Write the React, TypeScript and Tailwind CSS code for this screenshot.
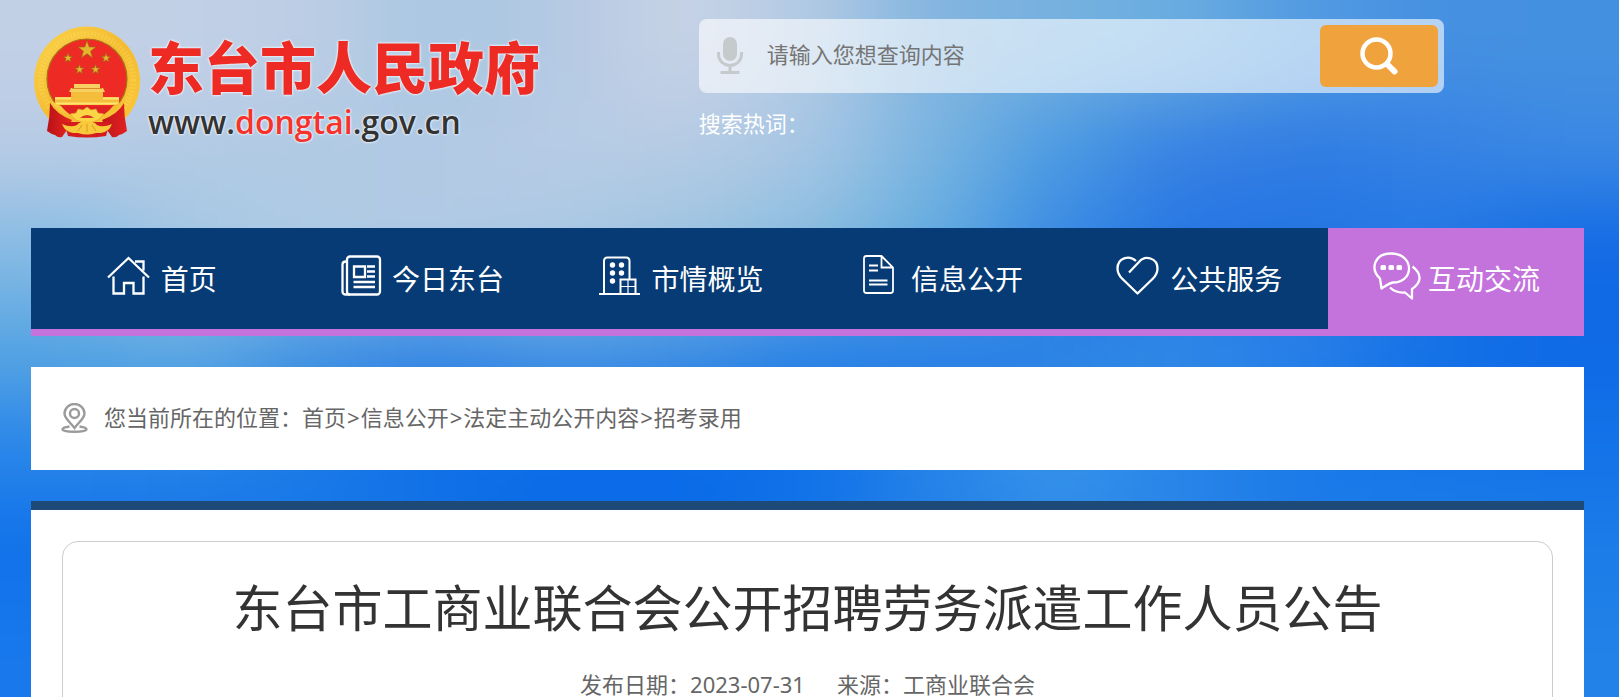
import type { ReactNode } from "react";

// Soft sky backdrop: one colour per cell, blended together by a blur
const sky = [
  ["#c2d0e6", "#c2d0e6", "#bccde5", "#a9c7e1", "#b4c9e3", "#c8d3e6", "#b2cae4", "#82b4df", "#76b1e0", "#68ace0", "#529ae2", "#4690e1", "#4490e0"],
  ["#b8cbe5", "#b2cae4", "#b0cae4", "#b2c9e4", "#b8cce5", "#b6cbe4", "#a6c6e4", "#78b4e0", "#4a9ae2", "#3680e3", "#2f7ce3", "#3481e5", "#3a88e4"],
  ["#86bbe4", "#a4c8e4", "#b0cbe4", "#b2cae4", "#aac8e3", "#9cc4e1", "#88bcdf", "#62ace0", "#3688e4", "#2474e3", "#2374e3", "#2478e3", "#1269e4"],
  ["#56a4e2", "#5faae2", "#4494e2", "#3a8ae4", "#4796e3", "#3f90e3", "#2c84e5", "#2a80e5", "#2a80e4", "#3089e6", "#2880e8", "#1270e6", "#0f6ae6"],
  ["#2885e9", "#2683e7", "#1b79e6", "#0f6fe6", "#0a6ae8", "#0a6ae8", "#0f70e8", "#2884e8", "#3794e9", "#2884e8", "#1a79e8", "#1676e8", "#1373e8"],
  ["#1071ea", "#1474ea", "#1878ea", "#1272e8", "#0c6ce8", "#0c6ce8", "#1474e8", "#2080e8", "#2e8ae8", "#2884e8", "#1c7ce8", "#1c7ce8", "#1c7ce8"],
  ["#1878ec", "#1878ec", "#1878ec", "#1878ec", "#1878ec", "#1878ec", "#1878ec", "#1c7ce8", "#1f80e8", "#1f80e8", "#1f80e8", "#2080e8", "#2282e8"],
];

const Sky = () => {
  const cells = [];
  for (let y = -1; y <= 7; y++) {
    for (let x = -1; x <= 13; x++) {
      const row = sky[Math.min(Math.max(y, 0), 6)];
      cells.push(
        <rect key={`${x},${y}`} x={x * 10} y={y * 10} width="10.2" height="10.2" fill={row[Math.min(Math.max(x, 0), 12)]} />
      );
    }
  }
  return (
    <svg
      className="absolute inset-x-0 top-0 h-[700px] w-full"
      viewBox="0 0 130 70"
      preserveAspectRatio="none"
      aria-hidden="true"
    >
      <filter id="soft" filterUnits="userSpaceOnUse" x="-10" y="-10" width="150" height="90" colorInterpolationFilters="sRGB">
        <feGaussianBlur stdDeviation="4" />
      </filter>
      <g filter="url(#soft)">{cells}</g>
    </svg>
  );
};

const starPoints = (cx: number, cy: number, r: number) =>
  Array.from({ length: 10 }, (_, i) => {
    const radius = i % 2 ? r * 0.4 : r;
    const a = (Math.PI / 5) * i - Math.PI / 2;
    return `${cx + radius * Math.cos(a)},${cy + radius * Math.sin(a)}`;
  }).join(" ");

const Emblem = () => (
  <svg className="h-[112px] w-[106px] shrink-0" viewBox="0 0 106 112" aria-hidden="true">
    <defs>
      <linearGradient id="gold" x1="0" y1="0" x2="1" y2="1">
        <stop offset="0" stopColor="#fbd34a" />
        <stop offset="0.5" stopColor="#f4bb30" />
        <stop offset="1" stopColor="#fbc93a" />
      </linearGradient>
      <linearGradient id="drape" x1="0" y1="0" x2="1" y2="0">
        <stop offset="0" stopColor="#b81218" />
        <stop offset="0.3" stopColor="#e8241f" />
        <stop offset="0.6" stopColor="#b3141a" />
        <stop offset="1" stopColor="#e3211f" />
      </linearGradient>
    </defs>
    <ellipse cx="53" cy="55" rx="53" ry="54.500" fill="url(#gold)" />
    <circle cx="53" cy="54" r="46" fill="none" stroke="#fde06a" strokeWidth="6" strokeDasharray="2 1.500" opacity="0.3" />
    <circle cx="53" cy="53" r="40" fill="#ed2b24" stroke="#a8701a" strokeWidth="1.200" />
    {[
      [53, 24, 9.5],
      [34, 32, 5],
      [72, 32, 5],
      [45.5, 43.5, 5],
      [61.5, 43.5, 5],
    ].map(([x, y, r]) => (
      <polygon key={x} points={starPoints(x, y, r)} fill="#e6b52e" stroke="#a0611a" strokeWidth="0.700" />
    ))}
    <path d="M40 58h26v4h3l2 4h-2v3H37v-3h-2l2-4h3z" fill="#f8cf63" />
    <path d="M38 62.500h30" stroke="#d88a25" strokeWidth="1" />
    <path d="M37 66h32v5h16v8H21v-8h16z" fill="#f5bd3c" />
    <path d="M21 72.500h16M69 72.500h16M22 77.500h62" stroke="#fde56f" strokeWidth="2" />
    <path d="M25 80h56L71 90l-18 5-18-5z" fill="#de2322" />
    <path d="M16 77q6 11 22 17l-5 10-5 7q-4 1-7-2-4-1-8-4 3-14 3-28zM90 77q-6 11-22 17l5 10 5 7q4 1 7-2 4-1 8-4-3-14-3-28z" fill="url(#drape)" />
    <path d="M17 75q10 17 36 23 26-6 36-23l-10 5q-8 10-16 11-10 7-20 0-8-1-16-11z" fill="url(#gold)" />
    <path d="M30 96h46l-4 14q-19 3-38 0z" fill="#d41c1f" />
    <path d="M36 88l6-1 2-4 5 1 4-3 4 3 5-1 2 4 6 1-6 6q-11 5-22 0z" fill="#fbd546" stroke="#e0a028" strokeWidth="0.600" />
    <path d="M46 92q7-6 14 0z" fill="#d63a20" />
    <path d="M28 98q9 4 15 1 3-4 10-4t10 4q6 3 15-1-3 8-11 9h-5q-9 3-18 0h-5q-8-1-11-9z" fill="#f8ca3b" />
    <path d="M53 98v8M48 99l-4 6M58 99l4 6" stroke="#d99a25" strokeWidth="1" />
  </svg>
);

const NavIcon = ({ children }: { children: ReactNode }) => (
  <svg
    className="mb-1.5 size-12 shrink-0 overflow-visible"
    viewBox="0 0 48 48"
    fill="none"
    stroke="currentColor"
    strokeWidth="2.300"
    aria-hidden="true"
  >
    {children}
  </svg>
);

const navItems = [
  {
    label: "首页",
    icon: (
      <NavIcon>
        <path d="M1 25.500 21.500 6 42 25.500M28 9.500h8.500v9M6.500 24.500V41.500h10.500V31h9.500v10.500H36.500v-17" />
      </NavIcon>
    ),
  },
  {
    label: "今日东台",
    icon: (
      <NavIcon>
        <rect x="9" y="4.500" width="33" height="38" rx="3" />
        <path d="M8 9.500q-3.500 0-3.500 3v27q0 3 3.500 3H12M16 14.500h11v10.500H16zM29 14.500h8M29 19.500h8M29 24.500h8M15.500 30H37M15.500 35H37" />
      </NavIcon>
    ),
  },
  {
    label: "市情概览",
    icon: (
      <NavIcon>
        <path d="M6 41.500V9q0-3.500 3.500-3.500h18.500q3.500 0 3.500 3.500v18M1 42h41M22.500 42V27.500h15V42" strokeWidth="2" />
        <path d="M22.500 34.500H37M30 27v15" strokeWidth="1.200" />
        <g fill="currentColor" stroke="none">
          <circle cx="14.500" cy="13" r="2.700" />
          <circle cx="23.500" cy="13" r="2.700" />
          <circle cx="14.500" cy="21" r="2.700" />
          <circle cx="23.500" cy="21" r="2.700" />
          <circle cx="14.500" cy="29" r="2.700" />
        </g>
      </NavIcon>
    ),
  },
  {
    label: "信息公开",
    icon: (
      <NavIcon>
        <path d="M24.500 4H9.500Q7 4 7 6.500v32Q7 41 9.500 41h24q2.500 0 2.500-2.500V15.500zV15.500H36M12 13.500h9M12 18.500h9M12 28.500h18.500M12 32.500h18.500" strokeWidth="1.800" />
      </NavIcon>
    ),
  },
  {
    label: "公共服务",
    icon: (
      <NavIcon>
        <path
          d="M20 9C13 2.500 1.500 6 1.500 16.500c0 5 2 7.500 4.500 10L21.500 41.500 37 26.500c2.500-2.500 4.500-5 4.500-10C41.500 6 29 2.500 23 10L13 20.500"
          strokeLinejoin="round"
        />
      </NavIcon>
    ),
  },
  {
    label: "互动交流",
    active: true,
    icon: (
      <NavIcon>
        <path d="M6 26.500C-4 17 0 1.500 17 1.500c11 0 18 6.500 18 15 0 9-7.500 14-16 14-4 .5-7.500 3.500-11.500 6z" strokeLinejoin="round" />
        <path d="M38.500 14.500c9 7 10 15.500-.5 22.500v9.500L31 40.500c-6 .5-11-1-15-5" strokeLinejoin="round" />
        <g fill="currentColor" stroke="none">
          <rect x="6.500" y="13" width="5.500" height="5" rx="1.500" />
          <rect x="14.500" y="13" width="5.500" height="5" rx="1.500" />
          <rect x="22.500" y="13" width="5.500" height="5" rx="1.500" />
        </g>
      </NavIcon>
    ),
  },
];

const crumbs = ["首页", "信息公开", "法定主动公开内容", "招考录用"];

const Header = () => (
  <header className="flex items-start">
    <a href="#" className="flex w-[43%] items-start gap-2 pt-[26px] pl-[3px]">
      <Emblem />
      <span className="flex flex-col pt-2 whitespace-nowrap [text-shadow:0_0_2px_#fff,0_0_3px_#fff]">
        <span className="text-[56px] leading-[66px] font-black text-[#ed2b24]">东台市人民政府</span>
        <span className="font-['Open_Sans','Noto_Sans',sans-serif] text-[32px] leading-[44px] font-semibold text-[#333]">
          www.<span className="text-[#f5322b]">dongtai</span>.gov.cn
        </span>
      </span>
    </a>
    <div className="w-[48%] pt-[19px]">
      <form className="flex h-[74px] items-center rounded-lg bg-white/60 p-1.5" onSubmit={(e) => e.preventDefault()}>
        <svg className="ml-3 h-[38px] w-[26px] shrink-0" viewBox="0 0 26 38" fill="none" stroke="#c5cacd" strokeWidth="3" aria-hidden="true">
          <rect x="6" y="0" width="14" height="24" rx="7" fill="#c5cacd" stroke="none" />
          <path d="M1.500 15v2.500a11.500 11 0 0 0 23 0V15M13 28v7M3.500 35.500h19" />
        </svg>
        <input
          type="text"
          aria-label="搜索"
          placeholder="请输入您想查询内容"
          className="min-w-0 flex-1 bg-transparent px-6 pb-1 text-[22px] text-[#333] outline-none placeholder:text-[#757575]"
        />
        <button
          type="submit"
          aria-label="查询"
          className="flex h-full w-[118px] shrink-0 items-center justify-center rounded-md bg-[#f0a23c] text-white"
        >
          <svg className="size-[38px]" viewBox="0 0 38 38" fill="none" stroke="currentColor" aria-hidden="true">
            <circle cx="16.500" cy="16.500" r="14" strokeWidth="4.500" />
            <path d="M27 27l7.500 7.500" strokeWidth="6" strokeLinecap="round" />
          </svg>
        </button>
      </form>
      <p className="mt-3 text-[22px] leading-9 text-white">搜索热词：</p>
    </div>
  </header>
);

export default function App() {
  return (
    <div className="relative min-h-screen overflow-hidden bg-[#1a7aec] font-['Noto_Sans','Noto_Sans_CJK_SC',sans-serif]" lang="zh-CN">
      <Sky />
      <div className="relative mr-[35px] ml-[31px]">
        <div className="min-h-[228px]">
          <Header />
        </div>

        <nav className="flex border-b-[7px] border-[#c573dc] bg-[#063b75]">
          {navItems.map((item) => (
            <a
              key={item.label}
              href="#"
              className={`flex h-[101px] items-center justify-center gap-1.5 pl-0.5 text-[28px] whitespace-nowrap text-white ${
                item.active ? "w-[256px] bg-[#c573dc]" : "flex-1"
              }`}
            >
              {item.icon}
              {item.label}
            </a>
          ))}
        </nav>

        <div className="mt-[31px] flex h-[103px] items-center bg-white pb-0.5 pl-[30px] text-[22px] text-[#666]">
          <svg className="mr-4 h-[30px] w-[27px] shrink-0" viewBox="0 0 27 30" fill="none" stroke="#9b9b9b" strokeWidth="2.400" aria-hidden="true">
            <path d="M13.500 25C9 19 3.500 15.500 3.500 10.500a10 9.500 0 0 1 20 0c0 5-5.500 8.500-10 14.500z" />
            <circle cx="13.500" cy="10.500" r="4.500" />
            <path d="M8.500 23.500c-4 .5-7 1.500-7 3 0 3 24 3 24 0 0-1.500-3-2.500-7-3" />
          </svg>
          <span>您当前所在的位置：</span>
          {crumbs.map((crumb, index) => (
            <span key={crumb}>
              {index > 0 && <span className="px-px">&gt;</span>}
              <a href="#">{crumb}</a>
            </span>
          ))}
        </div>

        <main className="mt-[31px] border-t-[9px] border-[#1d4a77] bg-white px-[31px] pt-[31px]">
          <article className="rounded-2xl border border-[#ccc] px-8 pt-7 pb-8 text-center">
            <h1 className="text-[50px] leading-[76px] text-[#333]">东台市工商业联合会公开招聘劳务派遣工作人员公告</h1>
            <p className="mt-5 flex justify-center gap-8 text-[22px] leading-9 text-[#666]">
              <span>发布日期：2023-07-31</span>
              <span>来源：工商业联合会</span>
            </p>
          </article>
        </main>
      </div>
    </div>
  );
}
